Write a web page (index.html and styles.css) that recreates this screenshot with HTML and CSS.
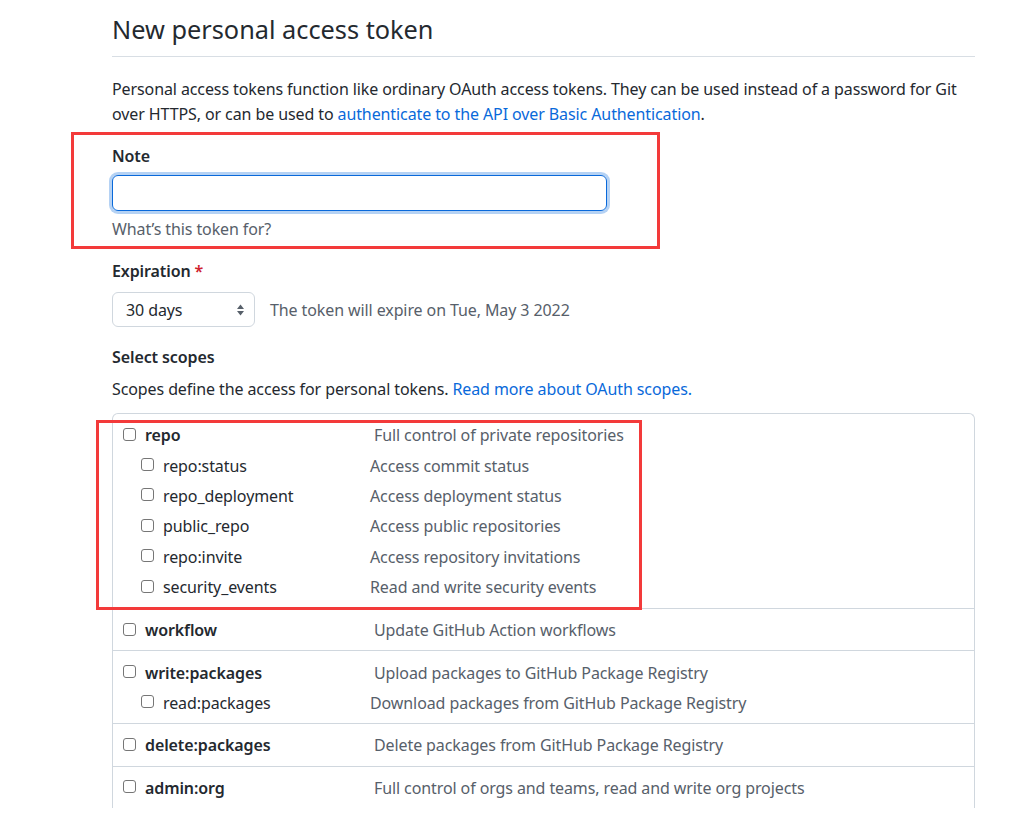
FILE: index.html
```html
<!DOCTYPE html>
<html>
<head>
<meta charset="utf-8">
<link rel="stylesheet" href="styles.css">
</head>
<body>
<div class="page">
  <h1 class="title">New personal access token</h1>
  <p class="intro">Personal access tokens function like ordinary OAuth access tokens. They can be used instead of a password for Git over HTTPS, or can be used to <a href="#">authenticate to the API over Basic Authentication</a>.</p>

  <div class="field">
    <label class="label">Note</label>
    <div class="input"></div>
    <div class="hint">What’s this token for?</div>
  </div>

  <div class="field field-exp">
    <label class="label">Expiration <span class="req">*</span></label>
    <div class="exp-row">
      <div class="select">
        <span>30 days</span>
        <svg class="arrows" width="9" height="14" viewBox="0 0 9 14"><path d="M4.5 1.5 L8 6 H1 Z M4.5 12.5 L8 8 H1 Z" fill="#57606a"/></svg>
      </div>
      <span class="exp-note">The token will expire on Tue, May 3 2022</span>
    </div>
  </div>

  <div class="field field-scopes">
    <label class="label">Select scopes</label>
    <p class="scopes-desc">Scopes define the access for personal tokens. <a href="#">Read more about OAuth scopes.</a></p>
  </div>

  <div class="scopes">
    <div class="group">
      <div class="row top"><span class="cb"></span><span class="name">repo</span><span class="desc">Full control of private repositories</span></div>
      <div class="row sub"><span class="cb"></span><span class="name">repo:status</span><span class="desc">Access commit status</span></div>
      <div class="row sub"><span class="cb"></span><span class="name">repo_deployment</span><span class="desc">Access deployment status</span></div>
      <div class="row sub"><span class="cb"></span><span class="name">public_repo</span><span class="desc">Access public repositories</span></div>
      <div class="row sub"><span class="cb"></span><span class="name">repo:invite</span><span class="desc">Access repository invitations</span></div>
      <div class="row sub"><span class="cb"></span><span class="name">security_events</span><span class="desc">Read and write security events</span></div>
    </div>
    <div class="group">
      <div class="row top"><span class="cb"></span><span class="name">workflow</span><span class="desc">Update GitHub Action workflows</span></div>
    </div>
    <div class="group">
      <div class="row top"><span class="cb"></span><span class="name">write:packages</span><span class="desc">Upload packages to GitHub Package Registry</span></div>
      <div class="row sub"><span class="cb"></span><span class="name">read:packages</span><span class="desc">Download packages from GitHub Package Registry</span></div>
    </div>
    <div class="group">
      <div class="row top"><span class="cb"></span><span class="name">delete:packages</span><span class="desc">Delete packages from GitHub Package Registry</span></div>
    </div>
    <div class="group">
      <div class="row top"><span class="cb"></span><span class="name">admin:org</span><span class="desc">Full control of orgs and teams, read and write org projects</span></div>
    </div>
  </div>
</div>
<div class="mark mark-note"></div>
<div class="mark mark-repo"></div>
</body>
</html>
```

FILE: styles.css
```css
* { box-sizing: border-box; }
html, body { margin: 0; padding: 0; background: #fff; }
body {
  font-family: "Noto Sans", "Open Sans", sans-serif;
  font-size: 16px;
  letter-spacing: -0.1px;
  color: #24292f;
  overflow: hidden;
  height: 817px;
  position: relative;
}
a { color: #0969da; text-decoration: none; }
.page {
  margin-left: 112px;
  width: 863px;
  padding-top: 11px;
}
.title {
  margin: 0;
  font-size: 25.3px;
  font-weight: 400;
  letter-spacing: 0;
  line-height: 36px;
  padding-bottom: 9px;
  border-bottom: 1px solid #d8dee4;
}
.intro {
  margin: 20px 0 0;
  line-height: 25px;
}
.field { display: flex; flex-direction: column; align-items: flex-start; }
.field:first-of-type { margin-top: 17px; }
.label { font-weight: 600; line-height: 24px; }
.req { color: #cf222e; }
.input {
  margin-top: 7px;
  width: 495px;
  height: 36px;
  border: 1px solid #0969da;
  border-radius: 6px;
  box-shadow: 0 0 0 3px rgba(9,105,218,0.3);
}
.hint { margin-top: 6px; line-height: 24px; color: #57606a; }
.field-exp { margin-top: 18px; }
.exp-row { display: flex; align-items: center; margin-top: 9px; gap: 15px; }
.select {
  width: 143px;
  height: 35px;
  border: 1px solid #d0d7de;
  border-radius: 6px;
  display: flex;
  align-items: center;
  justify-content: space-between;
  padding: 0 9px 0 13px;
}
.exp-note { color: #57606a; }
.field-scopes { margin-top: 18px; }
.scopes-desc { margin: 8px 0 0; line-height: 24px; }
.scopes {
  margin-top: 12px;
  border: 1px solid #d0d7de;
  border-radius: 6px 6px 0 0;
  border-bottom: none;
  height: 395px;
}
.group {
  padding: 6px 0 5px;
  border-bottom: 1px solid #d0d7de;
}
.group:first-child { padding-bottom: 5.6px; }
.group:last-child { border-bottom: none; }
.row {
  display: flex;
  align-items: center;
  height: 30.4px;
}
.row.top { padding-left: 10px; }
.row.sub { padding-left: 28px; }
.cb {
  width: 13px;
  height: 13px;
  border: 1px solid #767676;
  border-radius: 3px;
  flex: none;
  margin-right: 9px;
  margin-top: -2px;
}
.row.top .name { font-weight: 600; width: 229px; }
.row.sub .name { width: 207px; }
.desc { color: #57606a; }
.mark {
  position: absolute;
  border: 3px solid #f33a3a;
}
.mark-note { left: 71px; top: 132px; width: 589px; height: 117px; }
.mark-repo { left: 96px; top: 420px; width: 546px; height: 190px; }
```
